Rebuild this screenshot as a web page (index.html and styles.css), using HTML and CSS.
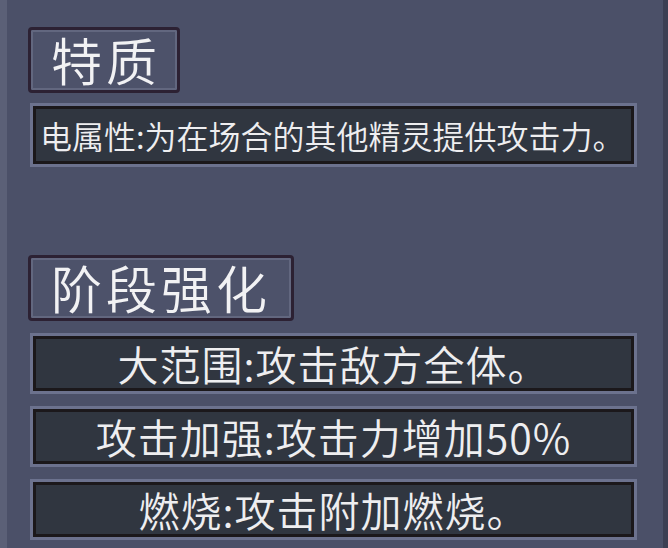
FILE: index.html
```html
<!doctype html>
<html>
  <head>
    <meta charset="UTF-8">
    <meta name="viewport" content="width=device-width, initial-scale=1.0">
    <title>特质</title>
    <link rel="stylesheet" href="styles.css">
  </head>
  <body>
    <div class="panel">
      <section class="group">
        <div class="tag">特质</div>
        <div class="entry entry-left">电属性:为在场合的其他精灵提供攻击力。</div>
      </section>

      <section class="group stages">
        <div class="tag">阶段强化</div>
        <div class="entry">大范围:攻击敌方全体。</div>
        <div class="entry">攻击加强:攻击力增加50%</div>
        <div class="entry">燃烧:攻击附加燃烧。</div>
      </section>
    </div>
  </body>
</html>
```

FILE: styles.css
```css
* {
  margin: 0;
  padding: 0;
  box-sizing: border-box;
}

body {
  width: 668px;
  height: 548px;
  overflow: hidden;
  font-family: "Noto Sans CJK SC", "Noto Sans", sans-serif;
  font-weight: 350;
  color: #eeeef0;
  background: #4b5068;
}

.panel {
  height: 548px;
  background: #4b5068;
  border-left: 7px solid #5b6077;
  border-right: 5px solid #3c3f53;
  padding: 27px 26px 0 23px;
}

.group {
  display: flex;
  flex-direction: column;
  align-items: flex-start;
  gap: 10px;
}

.stages {
  margin-top: 88px;
  gap: 12px;
}

/* section heading: dark pixel frame with a light inner ring */
.tag {
  height: 66px;
  padding: 0 16px 0 20px;
  margin-left: -2px;
  border: 3px solid #2c2133;
  border-radius: 4px;
  box-shadow: inset 0 0 0 2px #62677f;
  background: #4d526a;
  font-size: 51px;
  line-height: 58px;
  letter-spacing: 4px;
  color: #f2f2f4;
}

.stages .tag {
  padding-right: 20px;
}

/* text slot: light outer rim, dark inner rim */
.entry {
  width: 607px;
  height: 61px;
  display: flex;
  align-items: center;
  justify-content: center;
  border: 3px solid #6c728e;
  box-shadow: inset 0 0 0 3px #1b181b;
  background: #303640;
  font-size: 41px;
  line-height: 1;
  letter-spacing: 1px;
  color: #eeeef0;
  white-space: nowrap;
}

.entry-left {
  height: 64px;
  justify-content: flex-start;
  padding-left: 7px;
  font-size: 32px;
  letter-spacing: 0;
}
```
